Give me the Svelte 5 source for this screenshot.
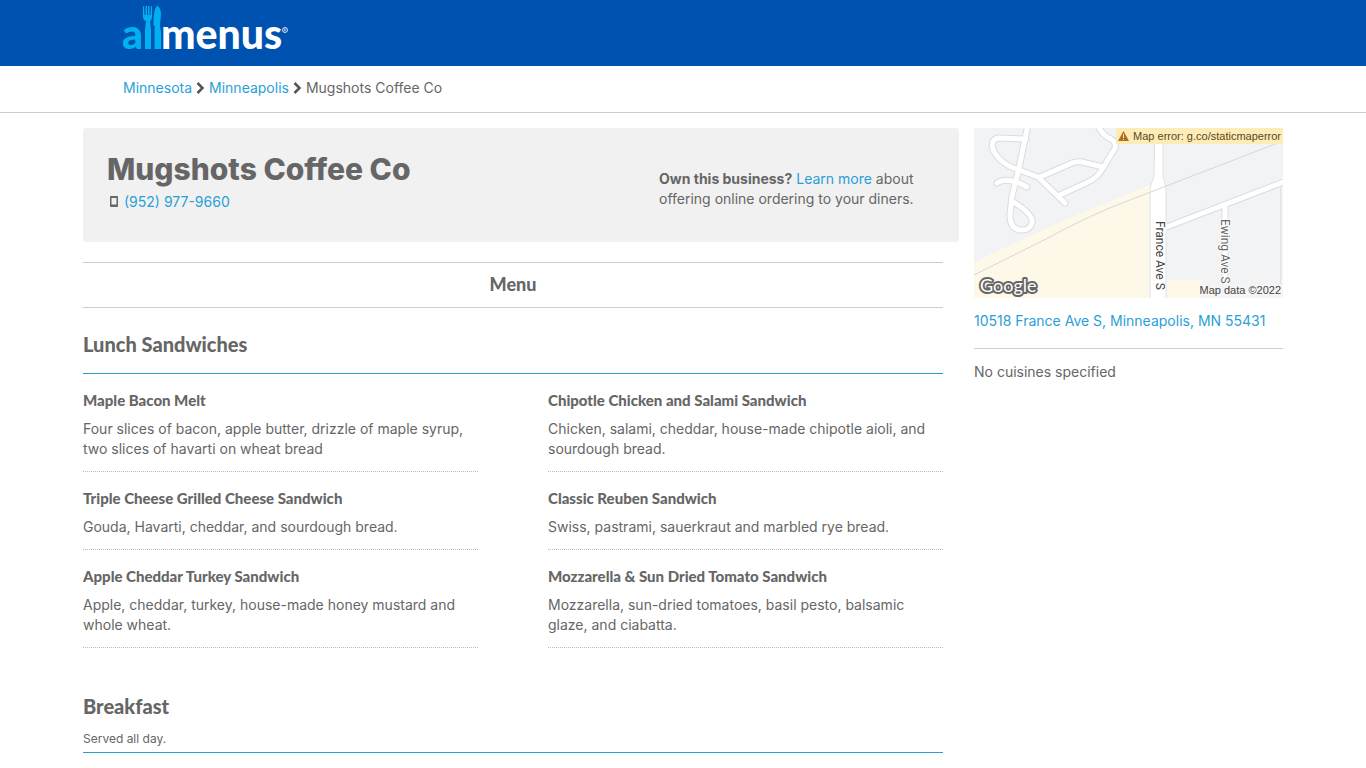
<script>
    const restaurant = {
        name: 'Mugshots Coffee Co',
        phone: '(952) 977-9660',
        address: '10518 France Ave S, Minneapolis, MN 55431'
    };

    const crumbs = ['Minnesota', 'Minneapolis'];

    const sections = [
        {
            title: 'Lunch Sandwiches',
            note: '',
            items: [
                { name: 'Maple Bacon Melt', text: 'Four slices of bacon, apple butter, drizzle of maple syrup, two slices of havarti on wheat bread' },
                { name: 'Chipotle Chicken and Salami Sandwich', text: 'Chicken, salami, cheddar, house-made chipotle aioli, and sourdough bread.' },
                { name: 'Triple Cheese Grilled Cheese Sandwich', text: 'Gouda, Havarti, cheddar, and sourdough bread.' },
                { name: 'Classic Reuben Sandwich', text: 'Swiss, pastrami, sauerkraut and marbled rye bread.' },
                { name: 'Apple Cheddar Turkey Sandwich', text: 'Apple, cheddar, turkey, house-made honey mustard and whole wheat.' },
                { name: 'Mozzarella & Sun Dried Tomato Sandwich', text: 'Mozzarella, sun-dried tomatoes, basil pesto, balsamic glaze, and ciabatta.' }
            ]
        },
        { title: 'Breakfast', note: 'Served all day.', items: [] }
    ];

    // street centre lines, drawn twice: grey casing, then white fill
    const roads = [
        'M54 -4L45 40L38 68L36 87Q36 100 45 102Q56 103 58 95Q60 87 41 75',
        'M52 11L24 10Q15 12 20 24Q28 37 45 42L64 49L91 75',
        'M66 49L98 35Q102 33 108 34L129 39',
        'M86 67L112 55Q124 50 129 40L141 20Q143 15 137 11Q130 9 124 -2',
        'M23 55Q34 48 53 59'
    ];
</script>

<header>
    <div class="inner">
        <a href="#home" aria-label="allmenus">
            <svg class="logo" viewBox="0 0 190 66">
                <text x="-1" y="49" class="cyan">a</text>
                <path class="cyan" d="M20 7Q20 6 21 6L21.500 15H22.500V6H24V15H25V6H26.500V15H27.500L28 6Q29 6 29 7V17Q29 20 27 21L28 30V49H22V30L23 21Q20 20 20 17Z" />
                <path class="cyan" d="M31.500 49V30L32 26H30.500Q30 11 34 5.500Q38 8 38 14L37 26L38 32V49Z" />
                <text x="38" y="49" fill="#fff">menus</text>
                <circle cx="162" cy="30" r="2.500" fill="none" stroke="#fff" stroke-width=".8" />
                <path d="M161.300 31.500V28.700H162.400Q163.400 29.500 162.300 30.100L163 31.500M161.300 30.100H162.300" fill="none" stroke="#fff" stroke-width=".5" />
            </svg>
        </a>
    </div>
</header>

<nav aria-label="Breadcrumb">
    <div class="inner">
        {#each crumbs as crumb}
            <a href="#{crumb}">{crumb}</a>
            <svg class="chevron" viewBox="0 0 9 12"><path d="M1.500 1L6.500 6L1.500 11" /></svg>
        {/each}
        <span>{restaurant.name}</span>
    </div>
</nav>

<main>
    <div class="content">
        <section class="info">
            <div>
                <h1>{restaurant.name}</h1>
                <p class="phone">
                    <svg viewBox="0 0 8 12"><path fill-rule="evenodd" d="M1 0H7Q8 0 8 1V10Q8 11 7 11H1Q0 11 0 10V1Q0 0 1 0ZM1.500 2V8.500H6.500V2Z" /></svg>
                    <a href="tel:9529779660">{restaurant.phone}</a>
                </p>
            </div>
            <p class="owner"><strong>Own this business?</strong> <a href="#learn">Learn more</a> about offering online ordering to your diners.</p>
        </section>

        <div class="menu">
            <h2 class="tab">Menu</h2>
            {#each sections as section}
                <section class="group">
                    <div class="group-head" class:noted={section.note}>
                        <h2>{section.title}</h2>
                        {#if section.note}<p>{section.note}</p>{/if}
                    </div>
                    <ul>
                        {#each section.items as item}
                            <li>
                                <h3>{item.name}</h3>
                                <p>{item.text}</p>
                            </li>
                        {/each}
                    </ul>
                </section>
            {/each}
        </div>
    </div>

    <aside>
        <svg class="map" viewBox="0 0 309 170" role="img" aria-label="Map">
            <rect width="309" height="170" fill="#f1f3f4" />
            <path fill="#fef8e8" d="M0 134L86 94L156 65L178 56L176 170H0ZM192 152H229V170H192Z" />
            <g fill="none" stroke-linecap="round" stroke-linejoin="round">
                {#each roads as road}<path d={road} stroke="#dadce0" stroke-width="7" />{/each}
                {#each roads as road}<path d={road} stroke="#fff" stroke-width="5" />{/each}
                <path d="M306.500 57V170" stroke="#dfe1e4" />
                <path d="M251 78V170M190 100L312 53" stroke="#dadce0" stroke-width="7" />
                <path d="M251 78V170M190 100L312 53" stroke="#fff" stroke-width="5" />
            </g>
            <path fill="#fff" stroke="#dfe1e4" d="M181 -1H189V48L192 60V171H176V60L180 48Z" />
            <path d="M190 97V103" stroke="#fff" stroke-width="5" />
            <path fill="none" stroke="#d5d7d9" d="M0 147L70 112Q120 85 156 72L309 13" />
            <text class="street" transform="translate(182 93) rotate(90)">France Ave S</text>
            <text class="street minor" transform="translate(247 91) rotate(90)">Ewing Ave S</text>
            <text class="google" x="6" y="164">Google</text>
            <rect x="226" y="156" width="83" height="14" fill="#f5f5f5" />
            <text class="credit" x="307" y="166">Map data ©2022</text>
            <rect x="142" width="167" height="16" fill="#fdebb8" />
            <path fill="#b06f1d" d="M149.500 3L155 13H144Z" />
            <path stroke="#fce8b2" d="M149.500 6V10M149.500 11V12" />
            <text class="credit error" x="307" y="12">Map error: g.co/staticmaperror</text>
        </svg>
        <a class="address" href="#map">{restaurant.address}</a>
        <p class="cuisines">No cuisines specified</p>
    </aside>
</main>

<style>
    :global(body) {
        background: #fff;
        color: #666;
        font: 14px/20px Inter, "Liberation Sans", sans-serif;
    }
    h1, h2, h3, p, ul { margin: 0; padding: 0; }
    a { color: #2a9fd8; text-decoration: none; }
    header { background: #0052b0; height: 66px; }
    .inner {
        max-width: 1120px;
        margin: 0 auto;
    }
    .logo {
        display: block;
        width: 190px;
        height: 66px;
        font: 900 41px Lato, "Open Sans", sans-serif;
    }
    .cyan { fill: #00b0f0; }
    nav {
        border-bottom: 1px solid #ccc;
        padding: 12px 0 14px;
    }
    nav .inner {
        display: flex;
        align-items: center;
        gap: 4px;
    }
    .chevron { width: 9px; height: 12px; }
    .chevron path { fill: none; stroke: #555; stroke-width: 2.5; }

    main {
        display: flex;
        gap: 15px;
        max-width: 1200px;
        margin: 15px auto 0;
    }
    .content { flex: 1; }
    .info {
        display: flex;
        justify-content: space-between;
        background: #f1f1f1;
        border-radius: 3px;
        padding: 21px 24px 30px;
    }
    h1 {
        font-size: 30px;
        font-weight: 800;
        line-height: 40px;
    }
    .phone {
        display: flex;
        align-items: center;
        gap: 6px;
        padding: 3px 3px 0;
    }
    .phone svg { width: 8px; height: 12px; fill: #666; }
    .owner {
        width: 276px;
        padding-top: 20px;
    }
    .menu { margin: 20px 16px 0 0; }
    h2, h3 {
        font-family: Lato, "Open Sans", sans-serif;
        font-weight: 900;
    }
    .tab {
        border: solid #ccc;
        border-width: 1px 0;
        padding: 9px 0 11px;
        font-size: 18px;
        line-height: 24px;
        text-align: center;
    }
    .group { padding: 22px 0; }
    .group-head {
        border-bottom: 1px solid #2a9fc8;
        padding-bottom: 15px;
    }
    .group-head.noted { padding-bottom: 3px; }
    .group-head h2 {
        font-size: 20px;
        line-height: 28px;
    }
    .group-head p {
        padding-top: 9px;
        font-size: 12px;
    }
    ul {
        display: grid;
        grid-template-columns: 1fr 1fr;
        column-gap: 70px;
        list-style: none;
    }
    li {
        border-bottom: 1px dotted #bbb;
        padding: 16px 0 12px;
    }
    h3 {
        margin-bottom: 9px;
        font-size: 15px;
        line-height: 20px;
    }
    aside { width: 309px; }
    .map { display: block; width: 100%; }
    .street {
        font: 12px Roboto, sans-serif;
        fill: #444;
        paint-order: stroke;
        stroke: #fff;
        stroke-width: 2px;
    }
    .minor { fill: #666; }
    .google {
        font: 18px Lato, sans-serif;
        fill: #fff;
        paint-order: stroke;
        stroke: #666;
        stroke-width: 4px;
        stroke-linejoin: round;
    }
    .credit {
        font: 11px "Liberation Sans", sans-serif;
        fill: #444;
        text-anchor: end;
    }
    .error { fill: #5a4a1c; }
    .address {
        display: block;
        border-bottom: 1px solid #ccc;
        padding: 13px 0 17px;
    }
    .cuisines { padding-top: 13px; }
</style>
